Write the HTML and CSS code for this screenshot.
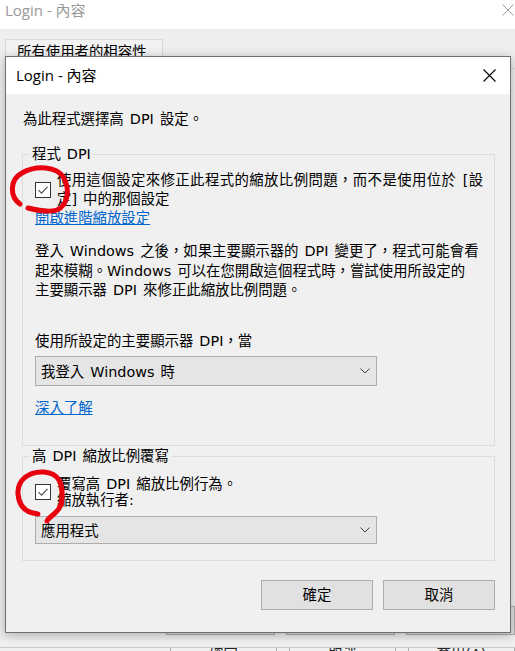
FILE: index.html
```html
<!DOCTYPE html>
<html lang="zh-Hant">
<head>
<meta charset="utf-8">
<title>Login - 內容</title>
<link rel="stylesheet" href="styles.css">
</head>
<body>
<div class="bgwin">
  <div class="bgtitle">
    <span class="bgtitle-text">Login - 內容</span>
    <svg class="bgclose" width="12" height="12" viewBox="0 0 12 12"><path d="M0.5 0.5 L11.5 11.5 M11.5 0.5 L0.5 11.5" stroke="#9a9a9a" stroke-width="1" fill="none"/></svg>
  </div>
  <div class="bgbody">
    <div class="tab">所有使用者的相容性</div>
    <div class="panel"></div>
    <div class="bgbuttons">
      <div class="bgbtn">確定</div>
      <div class="bgbtn">取消</div>
      <div class="bgbtn">套用(A)</div>
    </div>
  </div>
</div>
<div class="strip">
  <div class="stripbtn">確定</div>
  <div class="stripbtn">取消</div>
  <div class="stripbtn">套用(A)</div>
</div>

<div class="dialog">
  <div class="dtitle">
    <span>Login - 內容</span>
    <svg width="13" height="13" viewBox="0 0 13 13"><path d="M0.5 0.5 L12.5 12.5 M12.5 0.5 L0.5 12.5" stroke="#000" stroke-width="1.1" fill="none"/></svg>
  </div>
  <div class="dbody">
    <div class="intro">為此程式選擇高 DPI 設定。</div>

    <fieldset class="group g1">
      <legend>程式 DPI</legend>
      <div class="checkrow">
        <span class="checkbox"><svg width="14" height="14" viewBox="0 0 14 14"><path d="M2.5 7.2 L5.5 10.2 L11.5 3.8" stroke="#505050" stroke-width="1.2" fill="none"/></svg></span>
        <span class="cblabel l19"><span class="spread">使用這個設定來修正此程式的縮放比例問題，而不是使用位於 [設</span><br>定] 中的那個設定</span>
      </div>
      <a class="link l1">開啟進階縮放設定</a>
      <p class="para">登入 Windows 之後，如果主要顯示器的 DPI 變更了，程式可能會看<br>起來模糊。Windows 可以在您開啟這個程式時，嘗試使用所設定的<br>主要顯示器 DPI 來修正此縮放比例問題。</p>
      <div class="sublabel">使用所設定的主要顯示器 DPI，當</div>
      <div class="select s1">
        <span>我登入 Windows 時</span>
        <svg width="10" height="6" viewBox="0 0 10 6"><path d="M0.5 0.5 L5 5 L9.5 0.5" stroke="#404040" stroke-width="1" fill="none"/></svg>
      </div>
      <a class="link l2">深入了解</a>
    </fieldset>

    <fieldset class="group g2">
      <legend>高 DPI 縮放比例覆寫</legend>
      <div class="checkrow">
        <span class="checkbox"><svg width="14" height="14" viewBox="0 0 14 14"><path d="M2.5 7.2 L5.5 10.2 L11.5 3.8" stroke="#505050" stroke-width="1.2" fill="none"/></svg></span>
        <span class="cblabel l16">覆寫高 DPI 縮放比例行為。<br>縮放執行者:</span>
      </div>
      <div class="select s2">
        <span>應用程式</span>
        <svg width="10" height="6" viewBox="0 0 10 6"><path d="M0.5 0.5 L5 5 L9.5 0.5" stroke="#404040" stroke-width="1" fill="none"/></svg>
      </div>
    </fieldset>

    <div class="buttons">
      <div class="btn">確定</div>
      <div class="btn">取消</div>
    </div>
  </div>
</div>

<svg class="marks" width="515" height="651" viewBox="0 0 515 651">
  <path d="M20 204 C 10 197, 9 180, 22 173 C 36 165, 57 166, 64 178 C 70 190, 68 205, 57 210 C 48 213, 36 210, 28 208" stroke="#e8000f" stroke-width="5" fill="none" stroke-linecap="round"/>
  <path d="M47 521 C 50 515, 62 512, 62 498 C 63 484, 59 473, 44 472 C 29 471, 17 480, 18 494 C 19 506, 26 513, 38 514" stroke="#e8000f" stroke-width="5" fill="none" stroke-linecap="round"/>
</svg>
</body>
</html>
```

FILE: styles.css
```css
html, body {
  margin: 0;
  padding: 0;
}
body {
  width: 515px;
  height: 651px;
  overflow: hidden;
  position: relative;
  background: #f0f0f0;
  font-family: "DejaVu Sans", "Noto Sans CJK TC", sans-serif;
  font-size: 14.4px;
  word-spacing: 1.5px;
  color: #000;
}

/* background window */
.bgwin {
  height: 640px;
  display: flex;
  flex-direction: column;
}
.bgtitle {
  height: 29px;
  background: #fff;
  display: flex;
  align-items: flex-start;
  justify-content: space-between;
  padding: 0 0 0 5px;
  flex: none;
}
.bgtitle-text {
  font-family: "Open Sans", "Noto Sans CJK TC", sans-serif;
  word-spacing: 0;
  color: #999;
  font-size: 15px;
  line-height: 18px;
  margin-top: 1px;
}
.bgclose {
  margin-right: 1px;
  margin-top: 4px;
}
.bgbody {
  flex: 1;
  display: flex;
  flex-direction: column;
  background: #eeeeee;
  padding: 10px 0 5px 5px;
}
.tab {
  width: 145px;
  height: 28px;
  padding-left: 11px;
  border: 1px solid #d9d9d9;
  border-bottom: none;
  background: #f2f2f2;
  line-height: 24px;
  color: #000;
  white-space: nowrap;
}
.panel {
  flex: 1;
  border-top: 1px solid #d6d6d6;
}
.bgbuttons {
  display: flex;
  gap: 11px;
  padding-left: 161px;
}
.bgbtn {
  width: 109px;
  height: 27px;
  border: 1px solid #adadad;
  background: #e1e1e1;
  text-align: center;
  line-height: 27px;
}
.strip {
  margin-top: 7px;
  border-top: 1px solid #c8c8c8;
  height: 10px;
  display: flex;
  gap: 12px;
  padding-left: 170px;
  overflow: hidden;
  background: #f0f0f0;
}
.stripbtn {
  width: 109px;
  border-left: 1px solid #adadad;
  border-right: 1px solid #adadad;
  text-align: center;
  line-height: 24px;
  margin-top: -6px;
  color: #222;
}

/* dialog */
.dialog {
  position: absolute;
  left: 5px;
  top: 56px;
  width: 504px;
  height: 575px;
  border: 1px solid #6f6f6f;
  background: #f0f0f0;
  display: flex;
  flex-direction: column;
  box-shadow: 0 2px 10px rgba(0, 0, 0, 0.28);
}
.dtitle {
  height: 37px;
  flex: none;
  background: #fff;
  display: flex;
  align-items: center;
  justify-content: space-between;
  padding: 0 14px 0 10px;
  font-family: "Open Sans", "Noto Sans CJK TC", sans-serif;
  word-spacing: 0;
  font-size: 15px;
}
.dtitle span {
  line-height: 18px;
  margin-top: -1px;
}
.dbody {
  flex: 1;
  padding: 16px 15px 0 16px;
  display: flex;
  flex-direction: column;
}
.intro {
  padding-left: 1px;
  line-height: 19px;
  height: 19px;
}
.group {
  margin: 0;
  border: 1px solid #dcdcdc;
  padding: 0 12px;
  min-width: 0;
}
.group legend {
  padding: 0 2px;
  margin-left: -5px;
  line-height: 19px;
}
.g1 {
  margin-top: 16px;
  padding-top: 7px;
  padding-bottom: 27px;
}
.g2 {
  margin-top: 1px;
  padding-top: 10px;
  padding-bottom: 16px;
}
.checkrow {
  display: flex;
  align-items: center;
}
.checkbox {
  width: 14px;
  height: 14px;
  border: 1px solid #333;
  background: #fff;
  margin-right: 6px;
  flex: none;
  display: flex;
}
.cblabel {
  white-space: nowrap;
}
.spread {
  letter-spacing: 0.4px;
}
.l19 { line-height: 19px; }
.l16 { line-height: 16.5px; }
.link {
  display: block;
  color: #0066cc;
  text-decoration: underline;
  line-height: 19px;
  width: max-content;
}
.l1 { margin-top: 0; }
.l2 { margin-top: 13px; }
.para {
  margin: 14px 0 0;
  line-height: 19.5px;
  white-space: nowrap;
}
.sublabel {
  margin-top: 31px;
  line-height: 19px;
}
.select {
  border: 1px solid #adadad;
  background: #e5e5e5;
  display: flex;
  align-items: center;
  justify-content: space-between;
  padding: 0 6px 0 5px;
  box-sizing: border-box;
  width: 342px;
}
.s1 {
  margin-top: 5px;
  height: 30px;
}
.s2 {
  margin-top: 7px;
  height: 28px;
}
.buttons {
  margin-top: 19px;
  display: flex;
  justify-content: flex-end;
  gap: 10px;
}
.btn {
  width: 110px;
  height: 28px;
  border: 1px solid #adadad;
  background: #e1e1e1;
  text-align: center;
  line-height: 28px;
}
.marks {
  position: absolute;
  left: 0;
  top: 0;
  pointer-events: none;
}
```
